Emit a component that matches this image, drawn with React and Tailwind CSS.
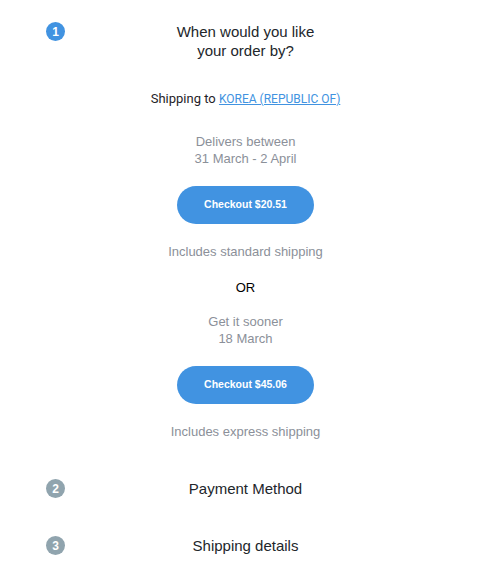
import React from 'react'

const arial = { fontFamily: '"Liberation Sans", Arial, sans-serif' }

function StepBadge({ n, active }) {
  return (
    <div
      className={`w-[19px] h-[19px] rounded-full grid place-items-center text-white font-bold text-[12px] leading-none ${active ? 'bg-[#4193e1]' : 'bg-[#90a4ae]'}`}
    >
      {n}
    </div>
  )
}

function StepHeader({ n, active, children }) {
  return (
    <div className="grid grid-cols-[19px_1fr_19px] items-start">
      <StepBadge n={n} active={active} />
      <div className="text-center text-[15px] leading-[19px] text-[#22262b]">{children}</div>
      <div />
    </div>
  )
}

function CheckoutButton({ amount }) {
  return (
    <button className="w-[137px] h-[38px] rounded-full bg-[#4193e1] text-white font-bold text-[10.5px]">
      Checkout {amount}
    </button>
  )
}

export default function App() {
  return (
    <div className="w-[488px] h-[582px] bg-white pl-[46px] pr-[43px] pt-[22px]" style={arial}>
      <StepHeader n="1" active>
        When would you like<br />your order by?
      </StepHeader>

      <div className="flex flex-col items-center text-center">
        <p className="mt-[29px] text-[13px] text-[#1f2328]" style={{ fontFamily: 'Roboto, sans-serif' }}>
          Shipping to{' '}
          <a href="#" className="text-[#4193e1] underline text-[12px]">KOREA (REPUBLIC OF)</a>
        </p>

        <div className="mt-[24px] text-[13px] leading-[17px] text-[#8b9099]">
          Delivers between<br />31 March - 2 April
        </div>
        <div className="mt-[19px]">
          <CheckoutButton amount="$20.51" />
        </div>
        <p className="mt-[18px] text-[13px] text-[#8b9099]">Includes standard shipping</p>

        <p className="mt-[17px] text-[13px] text-black">OR</p>

        <div className="mt-[15px] text-[13px] leading-[17px] text-[#8b9099]">
          Get it sooner<br />18 March
        </div>
        <div className="mt-[19px]">
          <CheckoutButton amount="$45.06" />
        </div>
        <p className="mt-[18px] text-[13px] text-[#8b9099]">Includes express shipping</p>
      </div>

      <div className="mt-[38px]">
        <StepHeader n="2">Payment Method</StepHeader>
      </div>
      <div className="mt-[38px]">
        <StepHeader n="3">Shipping details</StepHeader>
      </div>
    </div>
  )
}
